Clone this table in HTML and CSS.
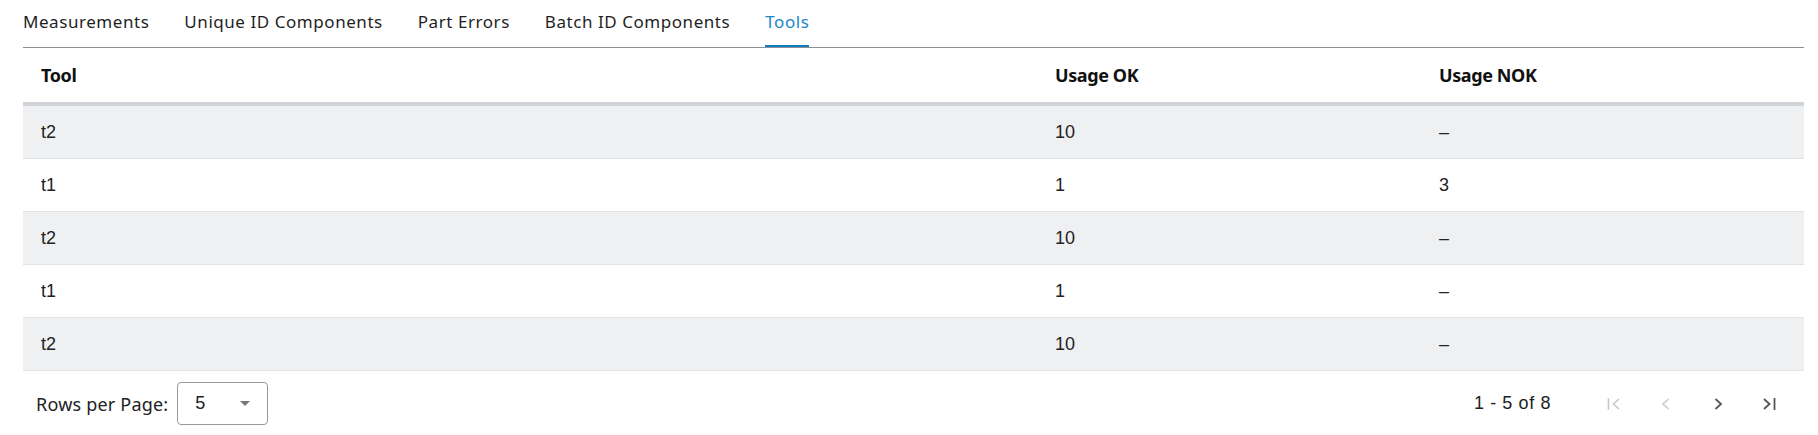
FILE: index.html
```html
<!DOCTYPE html>
<html lang="en">
<head>
<meta charset="utf-8">
<title>Tools</title>
<link rel="stylesheet" href="styles.css">
</head>
<body>
<div class="page">
  <nav class="tabs">
    <div class="tab">Measurements</div>
    <div class="tab">Unique ID Components</div>
    <div class="tab">Part Errors</div>
    <div class="tab">Batch ID Components</div>
    <div class="tab active">Tools</div>
  </nav>
  <div class="table">
    <div class="row head">
      <div class="cell">Tool</div>
      <div class="cell">Usage OK</div>
      <div class="cell">Usage NOK</div>
    </div>
    <div class="row odd"><div class="cell">t2</div><div class="cell">10</div><div class="cell">–</div></div>
    <div class="row"><div class="cell">t1</div><div class="cell">1</div><div class="cell">3</div></div>
    <div class="row odd"><div class="cell">t2</div><div class="cell">10</div><div class="cell">–</div></div>
    <div class="row"><div class="cell">t1</div><div class="cell">1</div><div class="cell">–</div></div>
    <div class="row odd"><div class="cell">t2</div><div class="cell">10</div><div class="cell">–</div></div>
  </div>
  <div class="footer">
    <div class="rpp">
      <span class="rpp-label">Rows per Page:</span>
      <div class="select"><span>5</span><span class="caret"></span></div>
    </div>
    <div class="pager">
      <span class="range">1 - 5 of 8</span>
      <span class="pbtn disabled"><svg width="14" height="14" viewBox="0 0 14 14"><path d="M1.5 1v12" stroke="currentColor" stroke-width="1.6" fill="none"/><path d="M12 2L6.5 7 12 12" stroke="currentColor" stroke-width="1.6" fill="none"/></svg></span>
      <span class="pbtn disabled"><svg width="14" height="14" viewBox="0 0 14 14"><path d="M9.5 2L4 7l5.5 5" stroke="currentColor" stroke-width="1.6" fill="none"/></svg></span>
      <span class="pbtn"><svg width="14" height="14" viewBox="0 0 14 14"><path d="M4.5 2L10 7l-5.5 5" stroke="currentColor" stroke-width="1.8" fill="none"/></svg></span>
      <span class="pbtn last"><svg width="14" height="14" viewBox="0 0 14 14"><path d="M2 2l5.5 5L2 12" stroke="currentColor" stroke-width="1.8" fill="none"/><path d="M12.5 1v12" stroke="currentColor" stroke-width="1.8" fill="none"/></svg></span>
    </div>
  </div>
</div>
</body>
</html>
```
FILE: styles.css
```css
* { box-sizing: border-box; }
html, body { margin: 0; padding: 0; background: #fff; }
body { font-family: "Noto Sans", "Liberation Sans", sans-serif; color: #1a1a1a; }
.page { padding: 0 14px 0 23px; }

.tabs {
  display: flex;
  height: 48px;
  border-bottom: 1px solid #8c9094;
}
.tab {
  font-size: 17px;
  line-height: 20px;
  padding: 12px 0 0;
  margin-right: 35px;
  color: #1f1f1f;
  height: 47px;
  letter-spacing: 0.55px;
}
.tab.active {
  color: #1c86c8;
  border-bottom: 2px solid #0f7cc2;
}

.table { display: flex; flex-direction: column; }
.row {
  display: grid;
  grid-template-columns: 1014px 384px 1fr;
  height: 53px;
  border-bottom: 1px solid #e0e2e5;
  align-items: center;
}
.row.head {
  height: 58px;
  border-bottom: 4px solid #d0d4d8;
}
.row.odd { background: #eff0f2; }
.cell {
  padding-left: 18px;
  font-family: "Liberation Sans", Arial, sans-serif;
  font-size: 18px;
  color: #222;
}
.head .cell {
  font-family: "Noto Sans", sans-serif;
  font-weight: 700;
  font-size: 18px;
  color: #111;
  letter-spacing: -0.4px;
}

.footer {
  display: flex;
  justify-content: space-between;
  align-items: center;
  height: 65px;
}
.rpp { display: flex; align-items: center; padding-left: 13px; }
.rpp-label { font-size: 18px; color: #222; margin-right: 9px; letter-spacing: 0.2px; }
.select {
  width: 91px;
  height: 43px;
  border: 1px solid #9a9a9a;
  border-radius: 4px;
  display: flex;
  align-items: center;
  justify-content: space-between;
  padding: 0 17px 0 17px;
  font-family: "Liberation Sans", Arial, sans-serif;
  font-size: 18px;
  color: #222;
}
.caret {
  width: 0; height: 0;
  border-left: 5px solid transparent;
  border-right: 5px solid transparent;
  border-top: 5px solid #777;
}
.pager { display: flex; align-items: center; padding-right: 28px; }
.range {
  font-family: "Liberation Sans", Arial, sans-serif;
  font-size: 18px;
  letter-spacing: 0.6px;
  color: #222;
  margin-right: 56px;
}
.pbtn {
  width: 14px; height: 14px;
  display: flex;
  color: #555;
  margin-left: 38px;
}
.pbtn.last { margin-left: 37px; }
.range + .pbtn { margin-left: 0; }
.pbtn.disabled { color: #c9c9c9; }
.pbtn svg { display: block; }
```
